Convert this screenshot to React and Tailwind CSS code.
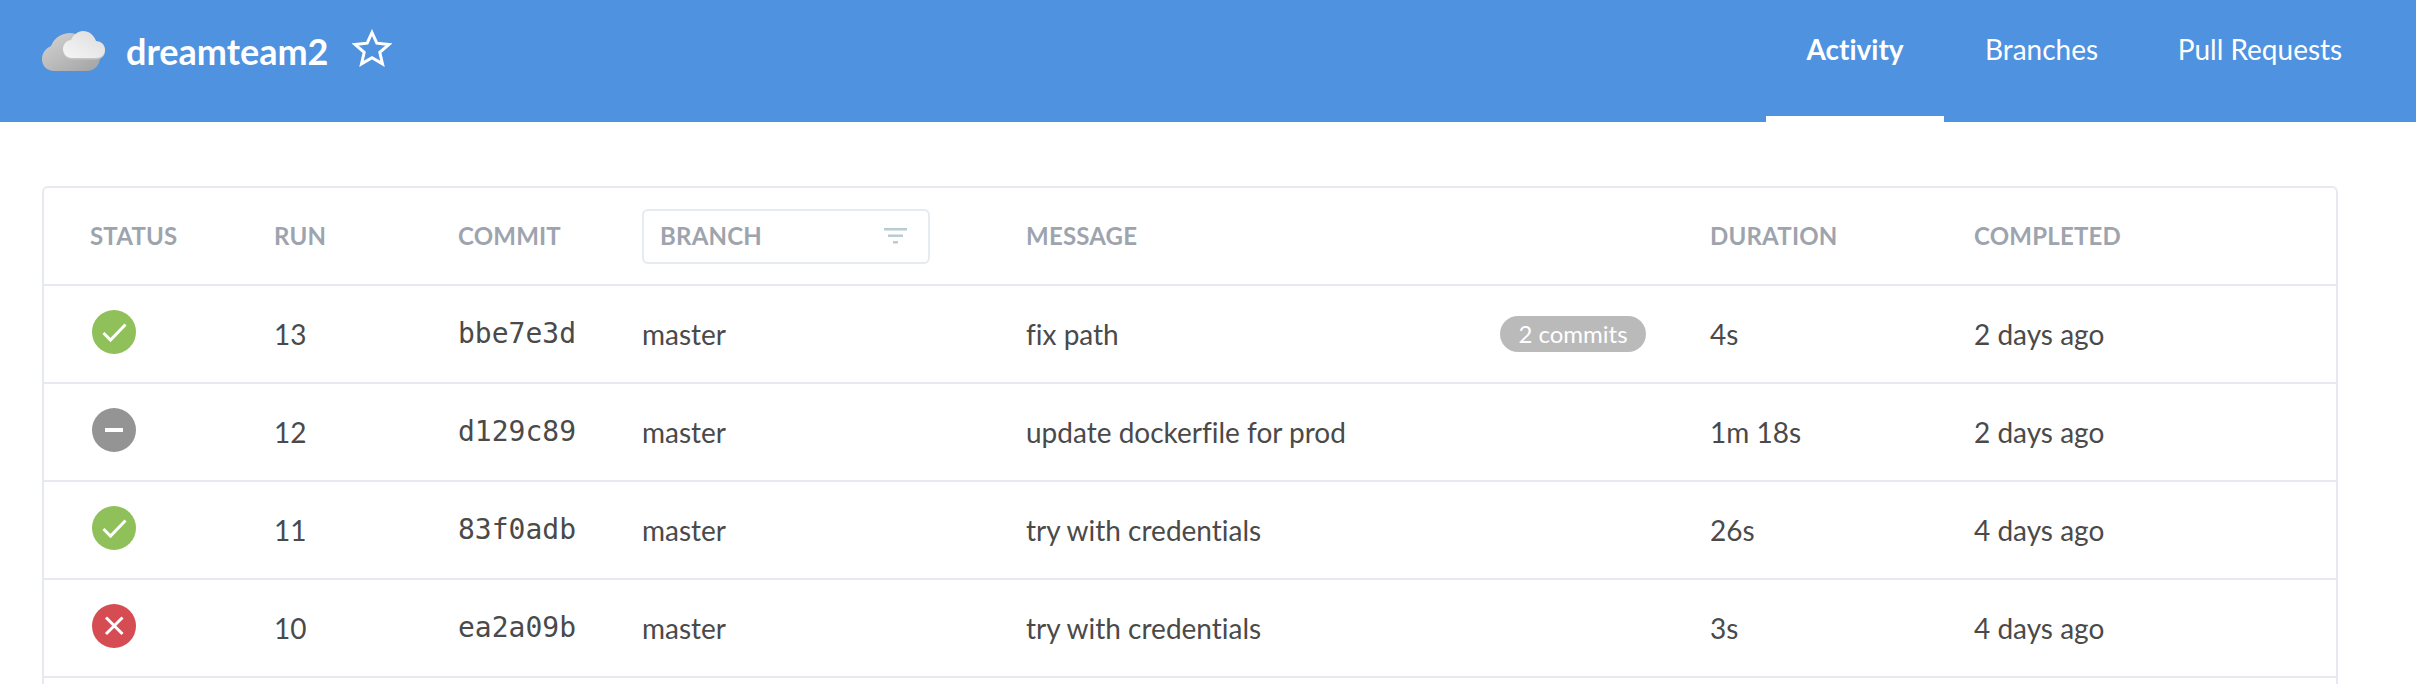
const runs = [
  { status: 'success', run: 13, commit: 'bbe7e3d', branch: 'master', message: 'fix path', badge: '2 commits', duration: '4s', completed: '2 days ago' },
  { status: 'aborted', run: 12, commit: 'd129c89', branch: 'master', message: 'update dockerfile for prod', duration: '1m 18s', completed: '2 days ago' },
  { status: 'success', run: 11, commit: '83f0adb', branch: 'master', message: 'try with credentials', duration: '26s', completed: '4 days ago' },
  { status: 'failure', run: 10, commit: 'ea2a09b', branch: 'master', message: 'try with credentials', duration: '3s', completed: '4 days ago' },
];

function CloudLogo() {
  return (
    <svg width="64" height="42" viewBox="0 0 64 42" className="shrink-0">
      <defs>
        <linearGradient id="cloudBack" x1="0" y1="0" x2="1" y2="1">
          <stop offset="0" stopColor="#d4d4d4" />
          <stop offset="1" stopColor="#a2a2a2" />
        </linearGradient>
        <linearGradient id="cloudFront" x1="0" y1="1" x2="1" y2="0">
          <stop offset="0" stopColor="#f6f6f6" />
          <stop offset="1" stopColor="#dcdcdc" />
        </linearGradient>
      </defs>
      <path d="M12 41C5 41 0 36 0 29c0-6 4-11 9-13C12 8 20 3 28 3c8 0 14 5 17 11h5c6 0 8 6 8 14 0 7-6 13-13 13z" fill="url(#cloudBack)" />
      <path d="M30 28c-5 0-9-4-9-9 0-5 4-9 8-9 2-5 7-9 12-9 6 0 11 4 13 10 5 0 9 4 9 8.500 0 5-4 8.500-9 8.500z" fill="#c4c4c4" transform="translate(0 1.500)" />
      <path d="M30 28c-5 0-9-4-9-9 0-5 4-9 8-9 2-5 7-9 12-9 6 0 11 4 13 10 5 0 9 4 9 8.500 0 5-4 8.500-9 8.500z" fill="url(#cloudFront)" />
    </svg>
  );
}

function StarOutline() {
  return (
    <svg width="40" height="38" viewBox="0 0 40 38" fill="none" stroke="white" strokeWidth="3" className="ml-[23px] mb-[6px]">
      <path d="M20 3.500 L24.800 14.200 L37 15.400 L27.800 23.400 L30.500 34.900 L20 28.800 L9.500 34.900 L12.200 23.400 L3 15.400 L15.200 14.200 Z" />
    </svg>
  );
}

function StatusIcon({ status }) {
  const bg = status === 'success' ? 'bg-[#8fc059]' : status === 'failure' ? 'bg-[#d54c53]' : 'bg-[#949494]';
  return (
    <div className={`w-11 h-11 mb-[3px] rounded-full flex items-center justify-center ${bg}`}>
      <svg width="44" height="44" viewBox="0 0 44 44" fill="none" stroke="white">
        {status === 'success' && <path d="M11.500 23 L18.500 30 L33.500 14.500" strokeWidth="3" />}
        {status === 'failure' && <path d="M14 13.500 L30.500 30 M30.500 13.500 L14 30" strokeWidth="3" />}
        {status === 'aborted' && <path d="M13 22 H31" strokeWidth="4" />}
      </svg>
    </div>
  );
}

function FilterIcon() {
  return (
    <svg width="24" height="16" viewBox="0 0 24 16" fill="#b8ccd4">
      <rect x="0" y="0" width="23" height="2.500" />
      <rect x="4" y="6.500" width="15" height="2.500" />
      <rect x="9" y="13" width="5" height="2.500" />
    </svg>
  );
}

export default function App() {
  return (
    <div className="h-[684px] overflow-hidden bg-white font-['Lato',sans-serif] [font-variant-ligatures:none]">
      {/* Top bar */}
      <header className="h-[122px] bg-[#4f92e0] flex justify-between text-white">
        <div className="flex items-center pl-[42px] pb-[20px]">
          <CloudLogo />
          <span className="ml-5 text-[36px] font-bold leading-none">dreamteam2</span>
          <StarOutline />
        </div>
        <nav className="flex pr-[35px] text-[28px]">
          <a className="w-[178px] flex justify-center items-center pb-[18px] font-bold border-b-[6px] border-white">Activity</a>
          <a className="w-[195px] flex justify-center items-center pb-[24px]">Branches</a>
          <a className="w-[242px] flex justify-center items-center pb-[24px]">Pull Requests</a>
        </nav>
      </header>

      {/* Runs table */}
      <main className="ml-[42px] mr-[78px] mt-[64px] border-2 border-b-0 border-[#e6e9ef] rounded-t-md text-[#4a4a4a] text-[28px]">
        <div className="h-[96px] flex items-center text-[24px] font-bold tracking-[0.2px] text-[#9da4ae]">
          <div className="w-[230px] pl-[46px] shrink-0">STATUS</div>
          <div className="w-[184px] shrink-0">RUN</div>
          <div className="w-[184px] shrink-0">COMMIT</div>
          <div className="w-[384px] shrink-0">
            <div className="w-[288px] h-[55px] border-2 border-[#e6ebef] rounded-md flex items-center justify-between pl-4 pr-[20px]">
              BRANCH
              <FilterIcon />
            </div>
          </div>
          <div className="w-[684px] shrink-0">MESSAGE</div>
          <div className="w-[264px] shrink-0">DURATION</div>
          <div>COMPLETED</div>
        </div>
        {runs.map((r) => (
          <div key={r.run} className="h-[98px] pb-[1px] border-t-2 border-[#e6e9ef] flex items-center">
            <div className="w-[230px] pl-[48px] shrink-0"><StatusIcon status={r.status} /></div>
            <div className="w-[184px] shrink-0">{r.run}</div>
            <div className="w-[184px] shrink-0 font-['DejaVu_Sans_Mono',monospace] text-[28px]">{r.commit}</div>
            <div className="w-[384px] shrink-0">{r.branch}</div>
            <div className="w-[684px] shrink-0 flex items-center justify-between pr-[64px]">
              <span>{r.message}</span>
              {r.badge && (
                <span className="w-[146px] h-[36px] rounded-full bg-[#bababa] text-white text-[24px] flex items-center justify-center">{r.badge}</span>
              )}
            </div>
            <div className="w-[264px] shrink-0">{r.duration}</div>
            <div>{r.completed}</div>
          </div>
        ))}
        <div className="border-t-2 border-[#e6e9ef] h-[20px]" />
      </main>
    </div>
  );
}
